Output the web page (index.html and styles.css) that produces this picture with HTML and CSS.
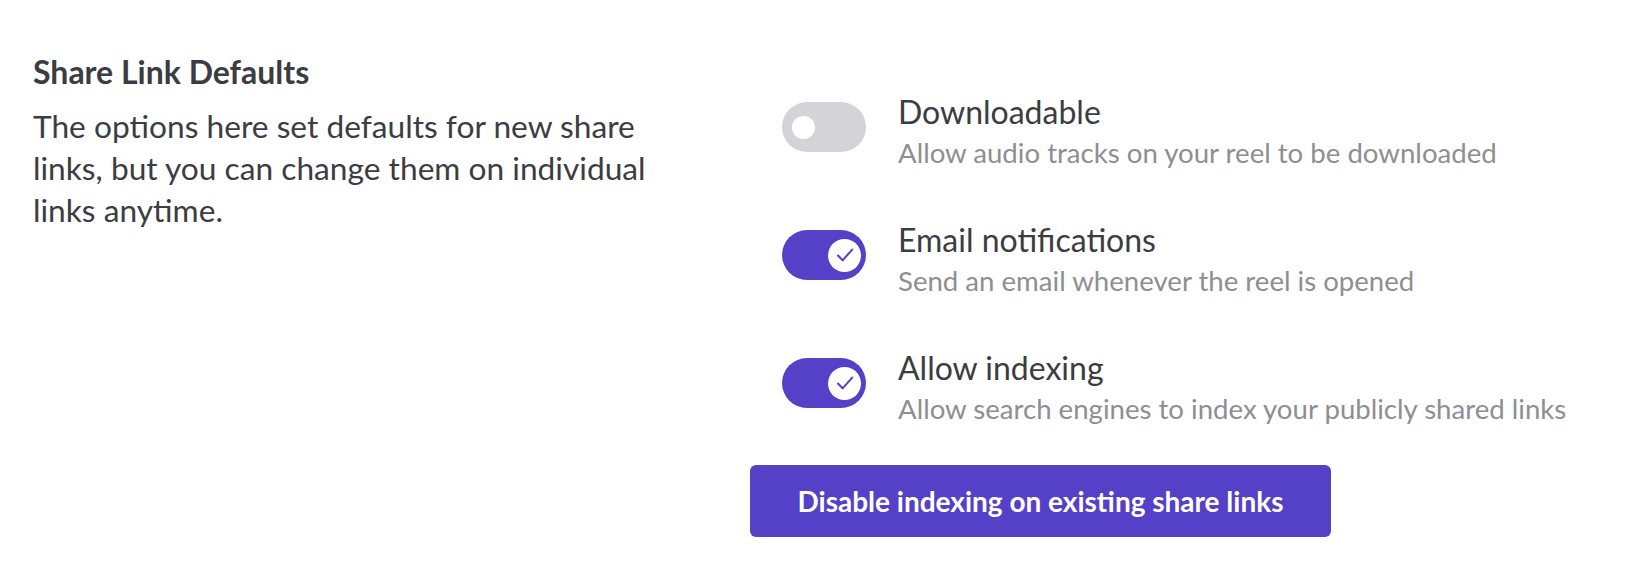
FILE: index.html
```html
<!DOCTYPE html>
<html lang="en">
<head>
<meta charset="utf-8">
<title>Share Link Defaults</title>
<link rel="stylesheet" href="styles.css">
</head>
<body>
<section class="settings">
  <div class="intro">
    <h2 class="intro-title">Share Link Defaults</h2>
    <p class="intro-text">The options here set defaults for new share links, but you can change them on individual links anytime.</p>
  </div>
  <div class="options">
    <div class="option">
      <span class="toggle toggle-off"><span class="knob"></span></span>
      <div class="option-text">
        <div class="option-title">Downloadable</div>
        <div class="option-desc">Allow audio tracks on your reel to be downloaded</div>
      </div>
    </div>
    <div class="option">
      <span class="toggle toggle-on"><span class="knob"><svg viewBox="0 0 32 32" width="32" height="32"><path d="M9 16.5L13.6 21.3L23.2 10.6" fill="none" stroke="#5540c8" stroke-width="2" stroke-linecap="round" stroke-linejoin="round"/></svg></span></span>
      <div class="option-text">
        <div class="option-title">Email notifications</div>
        <div class="option-desc">Send an email whenever the reel is opened</div>
      </div>
    </div>
    <div class="option">
      <span class="toggle toggle-on"><span class="knob"><svg viewBox="0 0 32 32" width="32" height="32"><path d="M9 16.5L13.6 21.3L23.2 10.6" fill="none" stroke="#5540c8" stroke-width="2" stroke-linecap="round" stroke-linejoin="round"/></svg></span></span>
      <div class="option-text">
        <div class="option-title">Allow indexing</div>
        <div class="option-desc">Allow search engines to index your publicly shared links</div>
      </div>
    </div>
    <button class="btn-primary" type="button">Disable indexing on existing share links</button>
  </div>
</section>
</body>
</html>
```

FILE: styles.css
```css
* { box-sizing: border-box; }
html, body { margin: 0; padding: 0; background: #ffffff; }
body {
  font-family: Lato, "Noto Sans", sans-serif;
  color: #3c3c43;
}
.settings {
  display: grid;
  grid-template-columns: 717px 1fr;
  align-items: start;
  padding: 52px 0 0 33px;
}
.intro-title {
  margin: 0;
  font-size: 32px;
  line-height: 40px;
  font-weight: 700;
  color: #3c3c43;
}
.intro-text {
  margin: 13px 0 0;
  width: 645px;
  font-size: 31.7px;
  line-height: 42px;
  font-weight: 400;
  color: #3c3c43;
}
.options {
  display: flex;
  flex-direction: column;
  align-items: flex-start;
  padding-top: 39px;
}
.option {
  display: flex;
  align-items: flex-start;
  gap: 32px;
  padding-left: 32px;
  margin-bottom: 46px;
}
.option:last-of-type { margin-bottom: 36px; }
.toggle {
  flex: none;
  margin-top: 11px;
  width: 84px;
  height: 50px;
  border-radius: 25px;
  display: flex;
  align-items: center;
}
.toggle-off {
  background: #d4d4d8;
  padding-left: 10px;
}
.toggle-off .knob {
  width: 23px;
  height: 23px;
  border-radius: 50%;
  background: #ffffff;
}
.toggle-on {
  background: #5540c8;
  justify-content: flex-end;
  padding-right: 5px;
}
.toggle-on .knob {
  width: 33px;
  height: 33px;
  border-radius: 50%;
  background: #ffffff;
  display: flex;
  align-items: center;
  justify-content: center;
}
.option-title {
  font-size: 32px;
  line-height: 42px;
  color: #3c3c43;
}
.option-desc {
  font-size: 27.6px;
  line-height: 40px;
  color: #8e8e93;
}
.btn-primary {
  font-family: Lato, "Noto Sans", sans-serif;
  font-weight: 700;
  font-size: 28px;
  line-height: 36px;
  color: #ffffff;
  background: #5540c8;
  border: none;
  border-radius: 6px;
  height: 72px;
  padding: 0;
  width: 581px;
  cursor: pointer;
}
```
